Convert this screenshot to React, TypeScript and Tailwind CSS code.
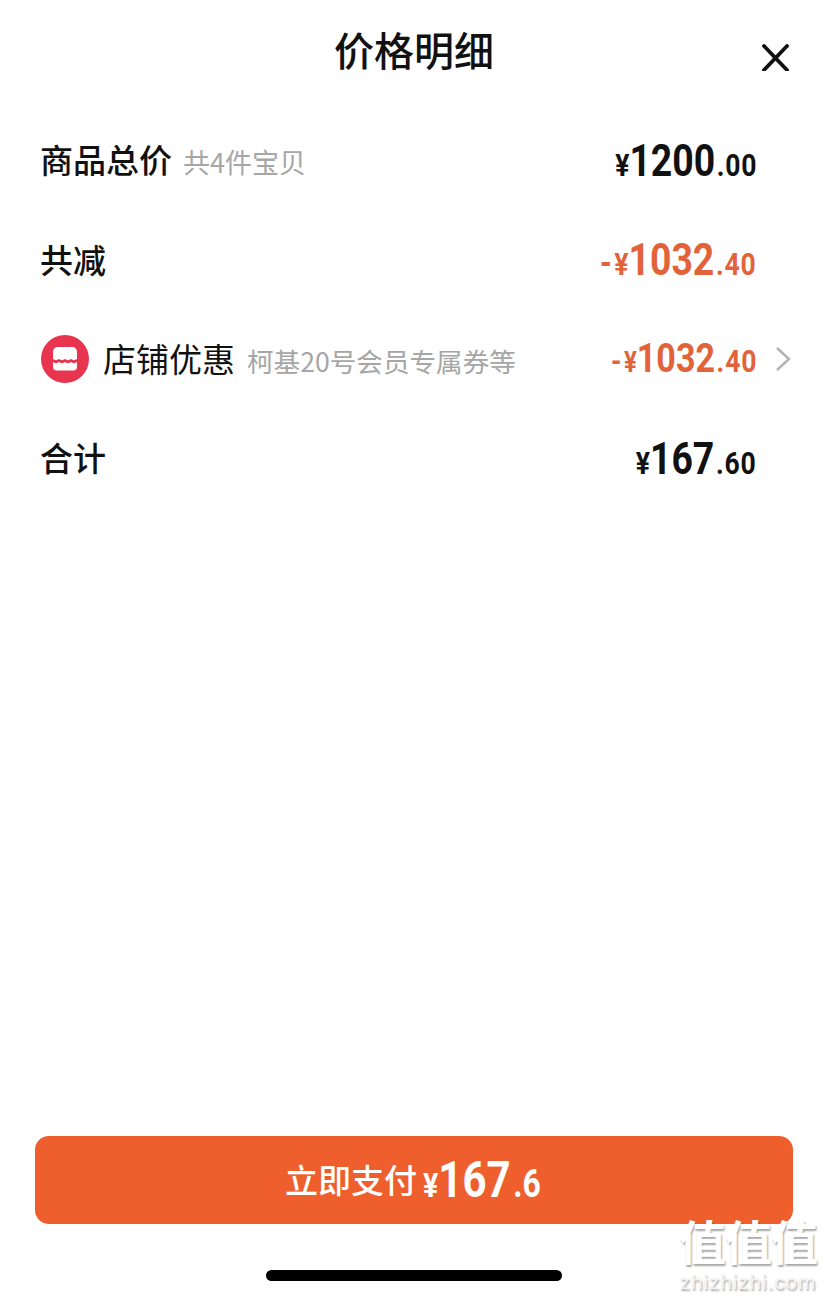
const cjk = "font-['Noto_Sans_CJK_SC',sans-serif]"
const num = "font-['Roboto','Liberation_Sans',sans-serif] font-bold"

const Price = ({ prefix, big, cents, color, small }: { prefix?: string; big: string; cents: string; color: string; small?: boolean }) => (
  <div className={`flex items-baseline leading-none origin-right scale-x-[0.83] ${num} ${color}`}>
    {prefix && <span className={`mr-[3px] ${small ? "text-[32px]" : "text-[36px]"}`}>{prefix}</span>}
    <span className={small ? "text-[29px]" : "text-[32px]"}>¥</span>
    <span className={small ? "text-[41px]" : "text-[45px]"}>{big}</span>
    <span className="text-[32px] tracking-[1px] ml-[2px]">{cents}</span>
  </div>
)

const ShopIcon = () => (
  <svg width="48" height="48" viewBox="0 0 48 48">
    <circle cx="24" cy="24" r="24" fill="#e8344e" />
    <path d="M12 24v-7c0-3 2-5 5-5h14c3 0 5 2 5 5v7c-2 1.500-4 1.500-6 0-2 1.500-4 1.500-6 0-2 1.500-4 1.500-6 0-2 1.500-4 1.500-6 0z" fill="#fff" />
    <path d="M12 27c2 1.500 4 1.500 6 0 2 1.500 4 1.500 6 0 2 1.500 4 1.500 6 0 2 1.500 4 1.500 6 0v5c0 2-1.500 3.500-3.500 3.500h-17c-2 0-3.500-1.500-3.500-3.500z" fill="#fff" />
  </svg>
)

const App = () => {
  return (
    <div className={`relative w-[828px] h-[1299px] bg-white flex flex-col overflow-hidden ${cjk}`}>
      <header className="relative h-[112px] flex justify-center pt-[20px]">
        <h1 className="text-[40px] leading-[58px] font-medium text-[#111]">价格明细</h1>
        <svg className="absolute left-[762px] top-[44px]" width="27" height="27" viewBox="0 0 27 27" fill="none" stroke="#111" strokeWidth="3.800" strokeLinecap="round">
          <path d="M2 2l23 24M25 2L2 26" />
        </svg>
      </header>

      <section className="flex flex-col pl-[40px] pr-[71px] -mt-[2px]">
        <div className="h-[100px] flex items-center justify-between">
          <div className="flex items-baseline gap-[11px]">
            <span className="text-[33px] font-medium text-[#111]">商品总价</span>
            <span className="text-[27px] text-[#a6a6a6]">共4件宝贝</span>
          </div>
          <Price big="1200" cents=".00" color="text-[#111]" />
        </div>
        <div className="h-[99px] flex items-center justify-between">
          <span className="text-[33px] font-medium text-[#111]">共减</span>
          <Price prefix="-" big="1032" cents=".40" color="text-[#e2633a]" />
        </div>
        <div className="h-[99px] flex items-center justify-between relative">
          <div className="flex items-center gap-[14px] pl-[1px]">
            <ShopIcon />
            <div className="flex items-baseline gap-[12px]">
              <span className="text-[33px] text-[#111]">店铺优惠</span>
              <span className="text-[26.600px] text-[#a6a6a6]">柯基20号会员专属券等</span>
            </div>
          </div>
          <Price prefix="-" big="1032" cents=".40" color="text-[#e2633a]" small />
          <svg className="absolute right-[-35px] top-[37px]" width="18" height="26" viewBox="0 0 18 26" fill="none" stroke="#b3b3b3" strokeWidth="2.500">
            <path d="M3 2l12 11L3 24" />
          </svg>
        </div>
        <div className="h-[100px] flex items-center justify-between">
          <span className="text-[33px] font-medium text-[#111]">合计</span>
          <Price big="167" cents=".60" color="text-[#111]" />
        </div>
      </section>

      <div className="mt-auto px-[35px] pb-[18px] flex flex-col items-center">
        <button className="w-full h-[88px] rounded-[14px] bg-[#ef5f2d] text-white flex items-center justify-center">
          <span className="text-[33px] font-medium mr-[6px]">立即支付</span>
          <span className={`w-[120px] flex items-baseline leading-none origin-left scale-x-[0.84] ${num}`}>
            <span className="text-[34px]">¥</span>
            <span className="text-[50px]">167</span>
            <span className="text-[38px] ml-[3px]">.6</span>
          </span>
        </button>
        <div className="mt-[46px] w-[296px] h-[11px] rounded-full bg-black" />
      </div>

      {/* watermark */}
      <div className="absolute left-[677px] top-[1217px] w-[142px] flex flex-col items-center text-white [text-shadow:1px_2px_2px_rgba(0,0,0,0.35)]">
        <span className="font-['Liberation_Sans','Noto_Sans_CJK_SC',sans-serif] text-[47px] leading-[53px] font-bold tracking-[-1px] whitespace-nowrap">值值值</span>
        <span className="font-['Liberation_Sans',sans-serif] text-[21px] leading-[24px] tracking-[0.8px] text-[#f4f4f4]">zhizhizhi.com</span>
      </div>
    </div>
  )
}

export default App
